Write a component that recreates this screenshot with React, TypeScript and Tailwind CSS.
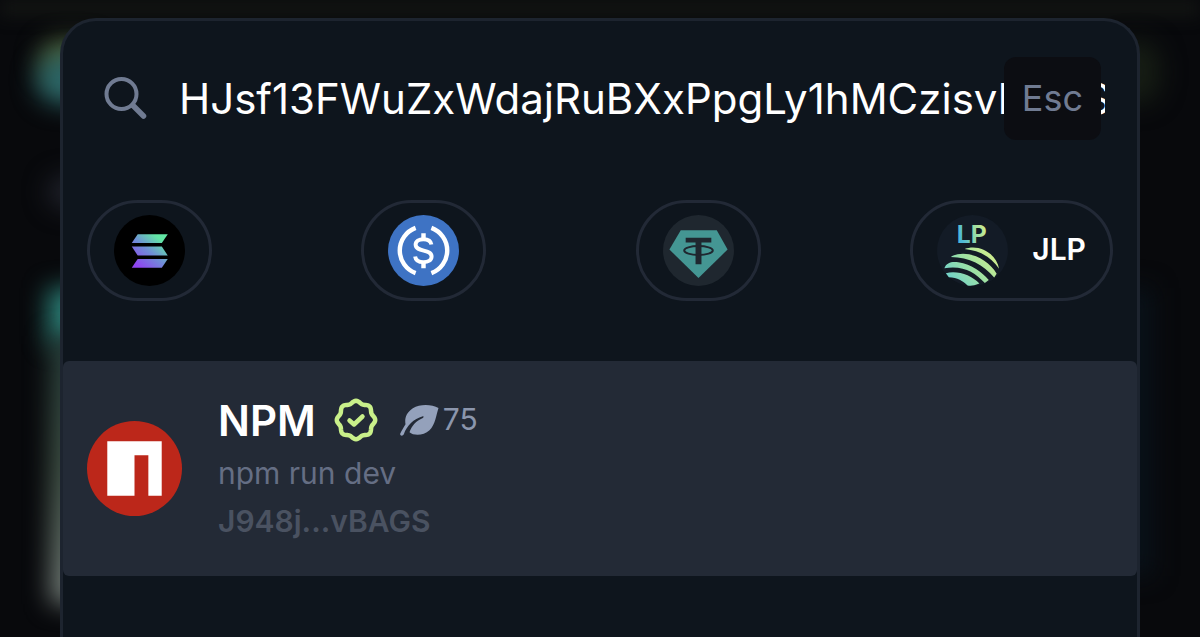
import React, { useState } from 'react';

interface Token {
  symbol: string;
  icon: React.ReactNode;
  showLabel?: boolean;
}

const SolanaIcon = () => (
  <svg viewBox="0 0 72 72" className="size-[71px]" aria-hidden="true">
    <defs>
      <linearGradient id="sol" gradientUnits="userSpaceOnUse" x1="20" y1="54" x2="50" y2="18">
        <stop offset="0.1" stopColor="#8f45f0" />
        <stop offset="0.5" stopColor="#6f8fd6" />
        <stop offset="0.85" stopColor="#62e6a4" />
      </linearGradient>
    </defs>
    <circle cx="36" cy="36" r="36" fill="#000" />
    <g fill="url(#sol)">
      <path d="M24 19.500h30.500l-6 9H18z" />
      <path d="M18 32h30.500l6 9H24z" />
      <path d="M24 44.500h30.500l-6 9H18z" />
    </g>
  </svg>
);

const UsdcIcon = () => (
  <svg viewBox="0 0 72 72" className="size-[71px]" fill="none" stroke="#fff" aria-hidden="true">
    <circle cx="36" cy="36" r="36" fill="#3e73c4" stroke="none" />
    <path d="M28 13a24.500 24.500 0 0 0 0 46M44 13a24.500 24.500 0 0 1 0 46" strokeWidth="4.500" />
    <path d="M36 18.500v6M36 48v6" strokeWidth="4.500" />
    <path d="M44 30c-.5-3.500-3.300-5.500-8-5.500s-8 2.200-8 5.500c0 8.200 16.200 4 16.200 12 0 3.800-3.500 5.800-8.200 5.800s-8-2-8.500-5.800" strokeWidth="4" />
  </svg>
);

const UsdtIcon = () => (
  <svg viewBox="0 0 72 72" className="size-[71px]" aria-hidden="true">
    <circle cx="36" cy="36" r="36" fill="#1f272f" />
    <path d="M18 15.500h36.500l11 19.500L36 64 6.500 35z" fill="#449693" />
    <path d="M23 23h26v5H39v22h-6V28H23z" fill="#1f272f" />
    <ellipse cx="36" cy="36" rx="14.500" ry="4.500" fill="none" stroke="#1f272f" strokeWidth="2" />
  </svg>
);

const JlpIcon = () => (
  <svg viewBox="0 0 72 72" className="size-[71px]" aria-hidden="true">
    <defs>
      <linearGradient id="jlp" gradientUnits="userSpaceOnUse" x1="12" y1="70" x2="54" y2="34">
        <stop offset="0" stopColor="#6bd0d0" />
        <stop offset="0.5" stopColor="#9be0a5" />
        <stop offset="1" stopColor="#d3ef8c" />
      </linearGradient>
      <linearGradient id="lp" gradientUnits="userSpaceOnUse" x1="21" y1="24" x2="50" y2="14">
        <stop offset="0.1" stopColor="#4db8d8" />
        <stop offset="0.55" stopColor="#8ed9ac" />
        <stop offset="1" stopColor="#d0ee8a" />
      </linearGradient>
    </defs>
    <circle cx="36" cy="36" r="36" fill="#131b26" />
    <text x="20" y="28" fontSize="25" fontWeight="700" fontFamily="Inter, sans-serif" fill="url(#lp)">LP</text>
    <g fill="url(#jlp)">
      <path d="M28 34.500c14-5.500 32 4 35 20-8-12-20-18.500-35-20z" />
      <path d="M14 42.500c15-9 38 2 46.500 17l-2.500 4C47 50 33 43 14 42.500z" />
      <path d="M7.500 54c2-6 8-7 14-6 14 2 24 10 31 18l-4 3C38 58 27 51 7.500 54z" />
      <path d="M9 59c12-3 26 2 34 10.500-6 2.500-9 2.500-12 2-5-5-10-8-19-8.500z" />
    </g>
  </svg>
);

// Circle with eight soft scallops
const SCALLOPS = Array.from({ length: 120 }, (_, i) => {
  const angle = (i / 120) * Math.PI * 2;
  const r = 18 + 1.2 * Math.cos(8 * angle);
  return `${(22 + r * Math.sin(angle)).toFixed(2)},${(22 - r * Math.cos(angle)).toFixed(2)}`;
}).join(' ');

const VerifiedIcon = () => (
  <svg viewBox="0 0 44 44" className="size-11" fill="none" stroke="#c9f08a" strokeWidth="4.500" strokeLinecap="round" strokeLinejoin="round" role="img" aria-label="Verified">
    <polygon points={SCALLOPS} />
    <path d="M15.500 22.500l4.500 4 8.500-8" />
  </svg>
);

const LeafIcon = () => (
  <svg viewBox="0 0 116 93" className="h-[31px] w-[39px]" fill="#94a1bb" aria-hidden="true">
    <path d="M115 9C95-2 60-4 38 10 18 24 13 40 16 58 10 68 4 78 0 86c-1 7 8 8 11 2C20 62 40 42 68 34c4 0 3 3 0 5-20 9-34 23-40 43 12 11 42 11 60-6 18-18 20-46 27-67z" />
  </svg>
);

const NpmLogo = () => (
  <svg viewBox="0 0 96 96" className="size-[95px] shrink-0" aria-hidden="true">
    <circle cx="48" cy="48" r="48" fill="#bc271a" />
    <path d="M20.500 20.500h55v55H62V34.500H48v41H20.500z" fill="#fff" />
  </svg>
);

const TOKENS: Token[] = [
  { symbol: 'SOL', icon: <SolanaIcon /> },
  { symbol: 'USDC', icon: <UsdcIcon /> },
  { symbol: 'USDT', icon: <UsdtIcon /> },
  { symbol: 'JLP', icon: <JlpIcon />, showLabel: true },
];

// Blurred page content that shows past the edges of the dialog
const Backdrop = () => (
  <div className="absolute inset-0 -z-10 overflow-hidden" aria-hidden="true">
    <div className="absolute inset-x-0 top-0 h-4 bg-[#131513] blur-sm" />
    <div className="absolute left-10 top-10 h-10 w-16 rounded-full bg-[#4c5f37] blur-md" />
    <div className="absolute left-9 top-14 h-12 w-16 rounded-full bg-[#2b6667] blur-md" />
    <div className="absolute left-12 top-44 h-8 w-12 rounded-full bg-[#20222b] blur-md" />
    <div className="absolute left-12 top-72 h-14 w-12 bg-[#2b8077] blur-md" />
    <div className="absolute left-[50px] top-[336px] h-[268px] w-12 bg-linear-to-b from-[#253c38] via-[#405246] to-[#747d79] blur-md" />
    <div className="absolute right-10 top-10 h-16 w-12 rounded-full bg-[#161d14] blur-md" />
    <div className="absolute right-12 top-72 h-72 w-8 bg-[#09121a] blur-md" />
  </div>
);

const App: React.FC = () => {
  const [query, setQuery] = useState('HJsf13FWuZxWdajRuBXxPpgLy1hMCzisvBAGS');

  return (
    <div className="relative isolate flex h-screen overflow-hidden bg-[#08090c] px-[60px] pt-[18px] font-['Inter',sans-serif]">
      <Backdrop />
      <div role="dialog" aria-label="Search tokens" className="min-w-0 flex-1 rounded-t-[36px] border-3 border-b-0 border-[#1d242f] bg-[#0e151d]">
        <div className="relative flex h-[156px] items-center gap-8 pr-8 pl-10">
          <svg viewBox="0 0 44 44" className="size-11 shrink-0" fill="none" stroke="#707b92" strokeLinecap="round" aria-hidden="true">
            <circle cx="18.500" cy="17" r="15" strokeWidth="4" />
            <path d="M30 28.500l10.500 10.500" strokeWidth="5.500" />
          </svg>
          <input
            type="text"
            aria-label="Search"
            value={query}
            onChange={(e) => setQuery(e.target.value)}
            className="min-w-0 flex-1 bg-transparent text-[42px] leading-[60px] text-white outline-none"
          />
          <button type="button" className="absolute top-9 right-9 rounded-xl bg-[#0c0d12] px-[18px] py-[18px] text-4xl leading-[47px] text-[#707b92]">
            Esc
          </button>
        </div>

        <div className="flex justify-between px-6 pt-[23px]">
          {TOKENS.map((token) => (
            <button
              key={token.symbol}
              type="button"
              aria-label={token.symbol}
              className="flex items-center gap-6 rounded-full border-3 border-[#222936] px-6 py-3 text-3xl font-semibold text-white"
            >
              {token.icon}
              {token.showLabel && <span className="pb-1">{token.symbol}</span>}
            </button>
          ))}
        </div>

        <ul className="mt-[60px]">
          <li className="flex items-center gap-9 rounded-md bg-[#232a36] px-6 py-9">
            <NpmLogo />
            <div>
              <div className="flex h-[46px] items-center">
                <span className="text-[42px] font-semibold text-white">NPM</span>
                <span className="ml-[18px]">
                  <VerifiedIcon />
                </span>
                <span className="ml-[22px] flex items-center gap-1 text-3xl text-[#8b96ad]">
                  <LeafIcon />
                  <span className="pb-0.5">75</span>
                </span>
              </div>
              <p className="text-3xl leading-[60px] text-[#656e84]">npm run dev</p>
              <p className="text-3xl leading-[37px] font-semibold text-[#4a5261]">J948j...vBAGS</p>
            </div>
          </li>
        </ul>
      </div>
    </div>
  );
};

export default App;
